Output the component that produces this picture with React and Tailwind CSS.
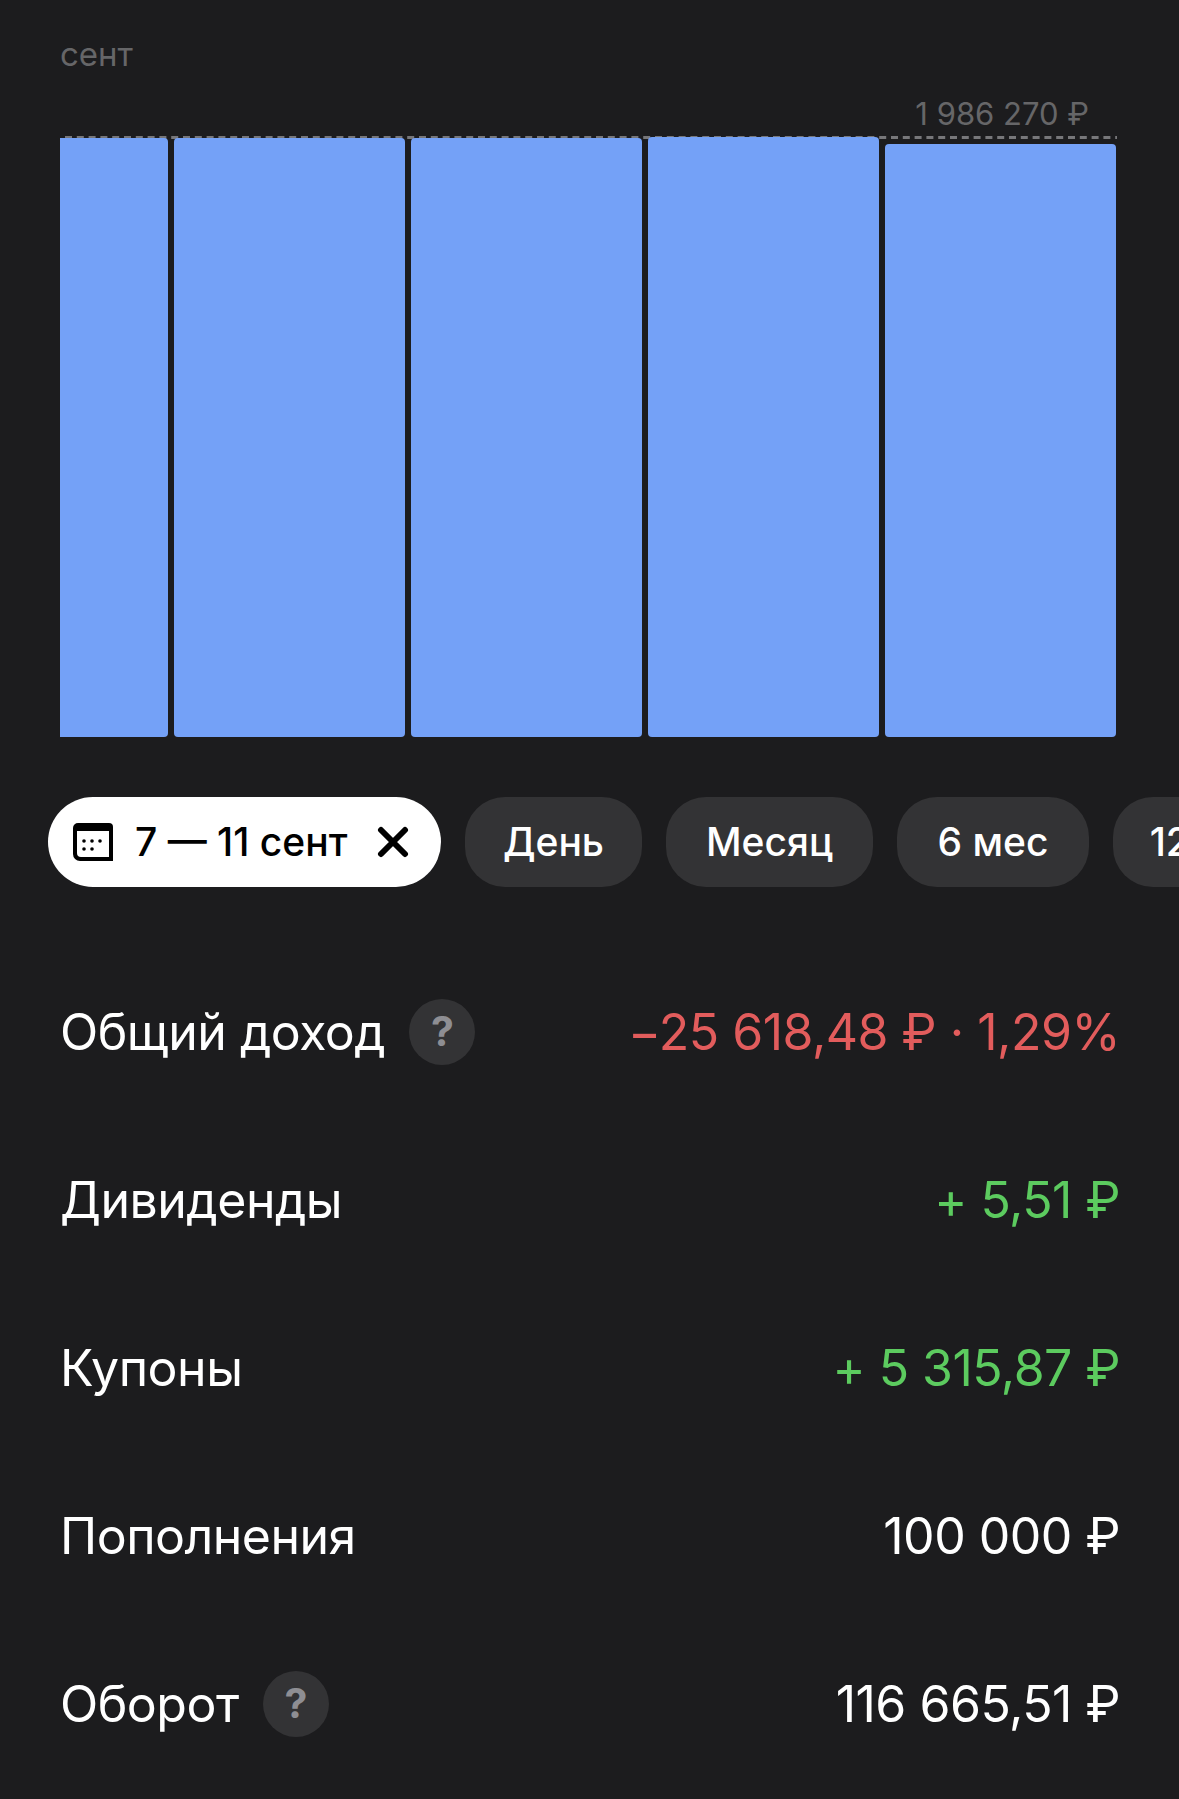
const bars = [
  { id: 1, w: "w-[108px]", h: "h-[599px]", r: "rounded-r-[4px]" },
  { id: 2, w: "w-[231px]", h: "h-[599px]", r: "rounded-[4px]" },
  { id: 3, w: "w-[231px]", h: "h-[599px]", r: "rounded-[4px]" },
  { id: 4, w: "w-[231px]", h: "h-[600px]", r: "rounded-[4px]" },
  { id: 5, w: "w-[231px]", h: "h-[593px]", r: "rounded-[4px]" },
];

const chips = [
  { label: "День", w: "w-[177px]" },
  { label: "Месяц", w: "w-[207px]" },
  { label: "6 мес", w: "w-[192px]" },
  { label: "12 мес", w: "w-[200px]" },
];

const rows = [
  { label: "Общий доход", value: "−25 618,48 ₽ · 1,29%", color: "text-[#e25c5c]", hint: true },
  { label: "Дивиденды", value: "+ 5,51 ₽", color: "text-[#5ccb5f]" },
  { label: "Купоны", value: "+ 5 315,87 ₽", color: "text-[#5ccb5f]" },
  { label: "Пополнения", value: "100 000 ₽", color: "text-white" },
  { label: "Оборот", value: "116 665,51 ₽", color: "text-white", hint: true },
];

const CalendarIcon = () => (
  <svg width="40" height="38" viewBox="0 0 40 38" fill="none">
    <path d="M5 0H36a4 4 0 0 1 4 4V38H7a7 7 0 0 1-7-7V5a5 5 0 0 1 5-5Z" fill="#000" />
    <path d="M4 8H36V34H8a4 4 0 0 1-4-4Z" fill="#fff" />
    <circle cx="11" cy="18" r="1.8" fill="#000" />
    <circle cx="19" cy="18" r="1.8" fill="#000" />
    <circle cx="27" cy="18" r="1.8" fill="#000" />
    <circle cx="11" cy="26" r="1.8" fill="#000" />
    <circle cx="19" cy="26" r="1.8" fill="#000" />
  </svg>
);

const CloseIcon = () => (
  <svg width="32" height="32" viewBox="0 0 32 32" fill="none">
    <path d="M4 4L28 28M28 4L4 28" stroke="#000" strokeWidth="6" strokeLinecap="round" />
  </svg>
);

const Hint = () => (
  <span className="flex h-[66px] w-[66px] items-center justify-center rounded-full bg-[#333335] text-[41px] font-bold text-[#8e8e93]">
    ?
  </span>
);

export default function App() {
  return (
    <div className="h-[1799px] w-[1179px] overflow-hidden bg-[#1c1c1e] font-['Inter',sans-serif]">
      {/* chart */}
      <div className="px-[60px] pt-[35px]">
        <div className="text-[33px] leading-[38px] text-[#666668]">сент</div>
        <div className="mt-[24px] pr-[30px] text-right text-[31px] leading-[34px] text-[#666668]">
          1 986 270 ₽
        </div>
        <div className="relative mt-[6px] flex h-[600px] items-end gap-[6px]">
          {/* max level line */}
          <svg className="absolute left-0 top-[-1px]" width="1057" height="3">
            <line x1="5" y1="1.5" x2="1057" y2="1.5" stroke="#77777a" strokeWidth="3" strokeDasharray="7 4.8" />
          </svg>
          {bars.map((b) => (
            <div key={b.id} className={`relative ${b.w} ${b.h} ${b.r} bg-[#74a1f7]`} />
          ))}
        </div>
      </div>

      {/* period chips */}
      <div className="mt-[60px] flex gap-[24px] pl-[48px]">
        <div className="flex h-[90px] w-[393px] shrink-0 items-center rounded-[45px] bg-white pl-[25px] text-[39px] font-[550] text-black">
          <CalendarIcon />
          <span className="ml-[22px] whitespace-nowrap">7 — 11 сент</span>
          <span className="ml-[30px]">
            <CloseIcon />
          </span>
        </div>
        {chips.map((c) => (
          <div
            key={c.label}
            className={`${c.w} flex h-[90px] shrink-0 items-center justify-center whitespace-nowrap rounded-[40px] bg-[#333335] text-[39px] font-[550] text-white`}
          >
            {c.label}
          </div>
        ))}
      </div>

      {/* totals */}
      <div className="mt-[103px] flex flex-col gap-[84px] pl-[60px] pr-[59px]">
        {rows.map((r) => (
          <div key={r.label} className="flex h-[84px] items-center justify-between text-[50px] tracking-[-0.5px]">
            <div className="flex items-center gap-[24px] text-white">
              <span>{r.label}</span>
              {r.hint && <Hint />}
            </div>
            <span className={r.color}>{r.value}</span>
          </div>
        ))}
      </div>
    </div>
  );
}
